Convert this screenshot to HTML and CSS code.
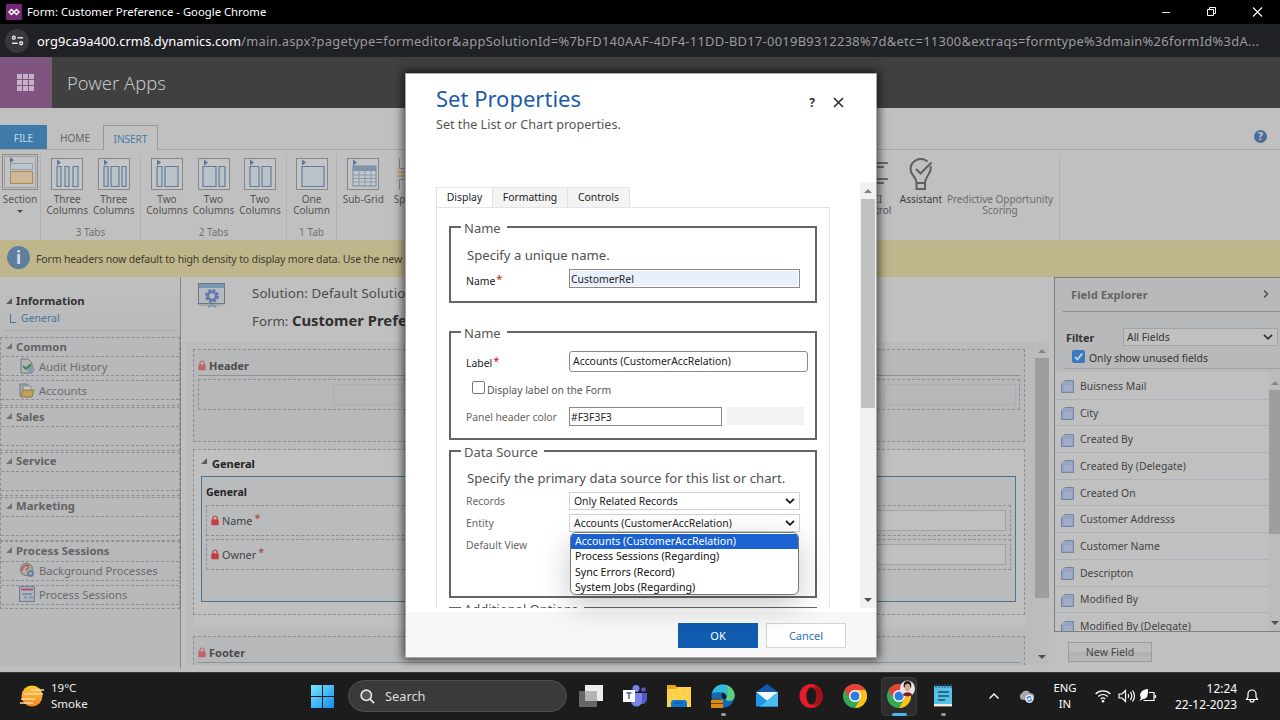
FILE: index.html
```html
<!DOCTYPE html>
<html lang="en">
<head>
<meta charset="utf-8">
<title>Form: Customer Preference</title>
<link rel="stylesheet" href="styles.css">
</head>
<body>
<svg class="defs" width="0" height="0">
  <symbol id="tile" viewBox="0 0 32 32"><rect x=".5" y=".5" width="31" height="31" fill="#c3c5c7" stroke="#85888b"/><path d="M6 1.500l4 3-4 3z" fill="#5b7693"/></symbol>
  <symbol id="lock" viewBox="0 0 8 11"><path d="M2 5V3a2 2 0 0 1 4 0v2" fill="none" stroke="currentColor" stroke-width="1.200"/><rect x=".3" y="4.600" width="7.400" height="5.600" rx=".8" fill="currentColor"/></symbol>
  <symbol id="field" viewBox="0 0 13 13"><path d="M4 .5h8.500v12H.5V4z" fill="#95a5c3" stroke="#74839f"/><path d="M.5 4H4V.5z" fill="#b6bfce" stroke="#8391ab" stroke-width=".6"/><path d="M3 6h8M3 8h8M3 10h8" stroke="#b3bed2" stroke-width=".7"/></symbol>
  <symbol id="chev" viewBox="0 0 10 6"><path d="M1 .8l4 4 4-4" fill="none" stroke="currentColor" stroke-width="1.700"/></symbol>
  <symbol id="chrome" viewBox="0 0 24 24"><circle cx="12" cy="12" r="12" fill="#35a853"/><path d="M12 12L1.600 6A12 12 0 0 1 22.400 6z" fill="#e94335"/><path d="M12 6h10.400A12 12 0 0 1 12 24l5.200-9z" fill="#fbc116"/><path d="M1.600 6l5.200 9L12 6z" fill="#e94335"/><circle cx="12" cy="12" r="6" fill="#fff"/><circle cx="12" cy="12" r="4.600" fill="#2a7de1"/></symbol>
</svg>
<div class="screen">
  <header class="titlebar">
    <svg class="app-mark" viewBox="0 0 16 16"><rect width="16" height="16" fill="#742774"/><path d="M5.500 5.500L8 8l-2.500 2.500L3 8zM10.500 5.500L13 8l-2.500 2.500L8 8z" fill="none" stroke="#fff" stroke-width="1.400"/></svg>
    <span class="window-title">Form: Customer Preference - Google Chrome</span>
    <svg class="win-ctl" viewBox="0 0 110 12"><path d="M1 6.500h8" stroke="#ddd" fill="none"/><path d="M46.500 3.500h6v6h-6zM48.500 3.500v-2h6v6h-2" stroke="#fff" fill="none"/><path d="M92 1.500l9 9M101 1.500l-9 9" stroke="#fff" fill="none" stroke-width="1.100"/></svg>
  </header>
  <div class="urlbar">
    <span class="site-btn"><svg viewBox="0 0 14 12" width="13" height="11"><g fill="none" stroke="#e3e3e3" stroke-width="1.500"><circle cx="3" cy="3" r="1.600"/><path d="M7 3h6M1 9h6"/><circle cx="11" cy="9" r="1.600"/></g></svg></span>
    <span class="url"><b>org9ca9a400.crm8.dynamics.com</b>/main.aspx?pagetype=formeditor&amp;appSolutionId=%7bFD140AAF-4DF4-11DD-BD17-0019B9312238%7d&amp;etc=11300&amp;extraqs=formtype%3dmain%26formId%3dA...</span>
  </div>
  <div class="appbar">
    <div class="waffle"><i></i><i></i><i></i><i></i><i></i><i></i><i></i><i></i><i></i></div>
    <span class="brand">Power Apps</span>
  </div>
  <nav class="ribbon-tabs">
    <span class="rt file">FILE</span><span class="rt home">HOME</span><span class="rt insert">INSERT</span>
    <span class="help">?</span>
  </nav>
  <div class="ribbon">
    <div class="rgroup g-section">
      <div class="rbtn"><svg class="ico-lg" viewBox="0 0 36 36"><rect x=".5" y=".5" width="35" height="35" fill="#bfbfbf" stroke="#8b8b8b"/><rect x="2.500" y="2.500" width="31" height="31" fill="#c1c3c5" stroke="#a0a0a0"/><path d="M8 3l4 3-4 3z" fill="#5b7693"/><rect x="8.500" y="9.500" width="22" height="6" fill="#bcc4cd" stroke="#8d9cae"/><rect x="8.500" y="17.500" width="22" height="12" fill="#cdb99a" stroke="#b08848"/></svg><span>Section</span><em class="down"></em></div>
    </div>
    <div class="rgroup g-three">
      <div class="rrow">
        <div class="rbtn"><svg class="ico"><use href="#tile"/><g class="cols"><path d="M6 8.500h4v20H6zM14 8.500h4v20h-4zM22 8.500h5v20h-5z"/></g></svg><span>Three<br>Columns</span></div>
        <div class="rbtn"><svg class="ico"><use href="#tile"/><g class="cols"><path d="M6 8.500h4v20H6zM13 8.500h8v20h-8zM24 8.500h4v20h-4z"/></g></svg><span>Three<br>Columns</span></div>
      </div>
      <div class="glabel">3 Tabs</div>
    </div>
    <div class="rgroup g-two">
      <div class="rrow">
        <div class="rbtn"><svg class="ico"><use href="#tile"/><g class="cols"><path d="M6 8.500h5v20H6zM14 8.500h13v20H14z"/></g></svg><span>Two<br>Columns</span></div>
        <div class="rbtn"><svg class="ico"><use href="#tile"/><g class="cols"><path d="M5 8.500h13v20H5zM21 8.500h6v20h-6z"/></g></svg><span>Two<br>Columns</span></div>
        <div class="rbtn"><svg class="ico"><use href="#tile"/><g class="cols"><path d="M6 8.500h9v20H6zM18 8.500h9v20h-9z"/></g></svg><span>Two<br>Columns</span></div>
      </div>
      <div class="glabel">2 Tabs</div>
    </div>
    <div class="rgroup g-one">
      <div class="rrow"><div class="rbtn"><svg class="ico"><use href="#tile"/><g class="cols"><path d="M6 8.500h22v20H6z"/></g></svg><span>One<br>Column</span></div></div>
      <div class="glabel">1 Tab</div>
    </div>
    <div class="rgroup g-grid">
      <div class="rrow">
        <div class="rbtn"><svg class="ico"><use href="#tile"/><rect x="6" y="8" width="23" height="20" fill="#c4c8cc" stroke="#76889d"/><path d="M6 8h23v5H6z" fill="#7f93aa"/><path d="M6 17h23M6 20.500h23M6 24h23M12 13v15M18 13v15M24 13v15" stroke="#8b9aab"/></svg><span>Sub-Grid</span></div>
        <div class="rbtn b-space"><svg class="ico"><path d="M2.500.500v10h27v-10M2.500 31.500v-10h27v10" fill="#c3c5c7" stroke="#85888b"/><path d="M0 14h32M0 18h32" stroke="#c09a55" stroke-width="1.500"/></svg><span>Spacer</span></div>
      </div>
    </div>
    <div class="rgroup g-ai">
      <div class="rrow">
        <div class="rbtn b-ctl"><svg class="ico"><path d="M4 5h26M10 9h16M4 21h26M10 25h16" stroke="#6c6c6c" stroke-width="2" fill="none"/></svg><span>BCI<br>Control</span></div>
        <div class="rbtn b-asst"><svg class="ico" viewBox="0 0 32 32"><g fill="none" stroke="#5f5f5f" stroke-width="2"><path d="M22.500 3.500A10.300 10.300 0 0 0 5.500 11c0 7 6 7 6 14M25.500 8c2 8-5.500 9-5.500 17M11.500 25v6h8.500v-6zM11.500 25h8.500"/><path d="M11 11l4.500 4.500L26.500 4.500"/></g></svg><span>Assistant</span></div>
        <div class="rbtn b-pred"><span>Predictive Opportunity<br>Scoring</span></div>
      </div>
    </div>
  </div>
  <div class="notice"><span class="info">i</span><span>Form headers now default to high density to display more data. Use the new form</span></div>

  <main class="work">
    <aside class="left">
      <div class="info-head"><em class="tri"></em>Information</div>
      <div class="info-link"><i></i>General</div>
      <section class="navg first"><h4><em class="tri"></em>Common</h4>
        <div class="navi"><svg viewBox="0 0 16 16"><path d="M2 1h7l4 4v10H2z" fill="#b3b5b6" stroke="#73797c"/><circle cx="12" cy="11" r="3.500" fill="#8b9aa6"/><path d="M4 8l3 3 5-5" stroke="#3f8150" stroke-width="1.800" fill="none"/></svg>Audit History</div>
        <div class="navi"><svg viewBox="0 0 16 16"><path d="M1 2h7l3 3v9H1z" fill="#a8abad" stroke="#73797c"/><path d="M4 4h8v7H4z" fill="#c4c8cb" stroke="#8a8a8a"/><path d="M2 15l2-7h11l-2 7z" fill="#c29f58" stroke="#97793f"/></svg>Accounts</div>
      </section>
      <section class="navg"><h4><em class="tri"></em>Sales</h4><div class="navi"></div></section>
      <section class="navg"><h4><em class="tri"></em>Service</h4><div class="navi"></div></section>
      <section class="navg"><h4><em class="tri"></em>Marketing</h4><div class="navi"></div></section>
      <section class="navg"><h4><em class="tri"></em>Process Sessions</h4>
        <div class="navi"><svg viewBox="0 0 16 16"><circle cx="7.500" cy="7.500" r="6" fill="#b7aaa0" stroke="#8d857f" stroke-width="1.500"/><path d="M3 9a5 5 0 0 1 7-5M7 8l3-3" stroke="#ae5b4e" stroke-width="1.500" fill="none"/><circle cx="11.500" cy="11.500" r="3.500" fill="#6681aa"/><circle cx="11.500" cy="11.500" r="1.200" fill="#b7b9ba"/></svg>Background Processes</div>
        <div class="navi"><svg viewBox="0 0 16 16"><rect x=".6" y=".6" width="14.800" height="14.800" fill="#b1b5bc" stroke="#6e7690"/><path d="M2 3.500h12" stroke="#a3576a" stroke-width="2"/><path d="M3 8h10M5 11.500h3M10 11.500h4" stroke="#8390ab" stroke-width="2"/></svg>Process Sessions</div>
      </section>
    </aside>

    <section class="center">
      <div class="form-head">
        <svg class="form-ico" viewBox="0 0 32 28"><path d="M1 22l5-3h22l3 3-5 2H5z" fill="#a8a8a8"/><rect x="3.500" y="1.500" width="26" height="20" fill="#b8bcc0" stroke="#6f7880"/><path d="M4 2h25v4H4z" fill="#7897b0"/><circle cx="17" cy="14" r="5.500" fill="none" stroke="#607bae" stroke-width="3" stroke-dasharray="2.800 1.500"/><circle cx="17" cy="14" r="4" fill="none" stroke="#607bae" stroke-width="2.500"/><path d="M13 25l4-2 4 2" stroke="#8896ad" stroke-width="2" fill="none"/></svg>
        <div><div class="sol">Solution: Default Solution</div><div class="frm">Form: <b>Customer Preference</b></div></div>
      </div>
      <div class="canvas">
        <div class="sheets">
          <div class="dash head-box">
            <div class="sec-title"><svg class="lock"><use href="#lock"/></svg>Header</div>
            <div class="dash cells"><i></i><i></i></div>
          </div>
          <div class="tab-sheet">
            <div class="dash tab-box">
              <div class="tab-title"><em class="tri"></em>General</div>
              <div class="blue-box">
                <h5>General</h5>
                <div class="dash frow"><svg class="lock"><use href="#lock"/></svg>Name<sup>*</sup><i></i></div>
                <div class="dash frow"><svg class="lock"><use href="#lock"/></svg>Owner<sup>*</sup><i></i></div>
              </div>
            </div>
          </div>
          <div class="dash foot-box"><div class="sec-title"><svg class="lock"><use href="#lock"/></svg>Footer</div></div>
        </div>
        <div class="vscroll"><em class="up"></em><i></i><em class="down"></em></div>
      </div>
    </section>

    <aside class="right">
      <div class="fe-panel">
        <div class="fe-title">Field Explorer<svg viewBox="0 0 6 8"><path d="M1 .5l3.500 3.500L1 7.500" fill="none" stroke="#555" stroke-width="1.600"/></svg></div>
        <div class="fe-filter"><b>Filter</b><span class="fe-select">All Fields<svg><use href="#chev"/></svg></span></div>
        <div class="fe-check"><svg viewBox="0 0 13 13"><rect width="13" height="13" rx="2" fill="#3a78c0"/><path d="M3 6.800l2.500 2.500L10.200 3.500" stroke="#ccd6e0" stroke-width="1.800" fill="none"/></svg>Only show unused fields</div>
        <div class="fe-list">
          <div class="fe-items">
            <div><svg><use href="#field"/></svg>Buisness Mail</div>
            <div><svg><use href="#field"/></svg>City</div>
            <div><svg><use href="#field"/></svg>Created By</div>
            <div><svg><use href="#field"/></svg>Created By (Delegate)</div>
            <div><svg><use href="#field"/></svg>Created On</div>
            <div><svg><use href="#field"/></svg>Customer Addresss</div>
            <div><svg><use href="#field"/></svg>Customer Name</div>
            <div><svg><use href="#field"/></svg>Descripton</div>
            <div><svg><use href="#field"/></svg>Modified By</div>
            <div><svg><use href="#field"/></svg>Modified By (Delegate)</div>
          </div>
          <div class="fe-scroll"><em class="up"></em><i></i><em class="down"></em></div>
        </div>
      </div>
      <div class="new-field">New Field</div>
    </aside>
  </main>

  <footer class="taskbar">
    <div class="weather"><svg viewBox="0 0 24 22" width="24" height="22"><defs><linearGradient id="sun" x2="0" y2="1"><stop offset="0" stop-color="#ffc933"/><stop offset="1" stop-color="#f2852a"/></linearGradient></defs><circle cx="12" cy="11" r="10.500" fill="url(#sun)"/><path d="M11 5h13M4 9h19M1 14h14M0 18h13" stroke="#f9dca6" stroke-width="1.600"/></svg><div>19°C<br>Smoke</div></div>
    <svg class="start" viewBox="0 0 23 23"><defs><linearGradient id="win" x2="1" y2="1"><stop offset="0" stop-color="#7ce6fb"/><stop offset="1" stop-color="#0f8df0"/></linearGradient></defs><path d="M0 0h11v11H0zM12 0h11v11H12zM0 12h11v11H0zM12 12h11v11H12z" fill="url(#win)"/></svg>
    <div class="search"><svg viewBox="0 0 16 16" width="15" height="15"><circle cx="6.700" cy="6.700" r="5.500" fill="#555" stroke="#e6e6e6" stroke-width="1.700"/><path d="M10.800 10.800L15 15" stroke="#e6e6e6" stroke-width="1.800"/></svg>Search</div>
    <div class="apps">
      <svg viewBox="0 0 24 24"><rect x="0" y="7" width="18" height="16" fill="#666"/><rect x="6" y="1" width="18" height="16" fill="#ededed"/><rect x="6" y="7" width="12" height="10" fill="#b4b4b4"/></svg>
      <svg viewBox="0 0 24 24"><circle cx="13" cy="4.500" r="3.500" fill="#7b83eb"/><circle cx="20.500" cy="5.500" r="2.300" fill="#5059c9"/><path d="M15 9h9v6a5 5 0 0 1-6 5z" fill="#5059c9"/><path d="M8 9h11v8a5.500 5.500 0 0 1-11 0z" fill="#7b83eb"/><rect x="0" y="6" width="12" height="12" fill="#fff"/><path d="M3.500 9h5M6 9v6" stroke="#4b53bc" stroke-width="1.400"/></svg>
      <svg viewBox="0 0 24 24"><path d="M0 1h8l2 2h14v20H0z" fill="#e9a815"/><path d="M0 5h9l2-2h13v20H0z" fill="#ffd04c"/><path d="M4 23v-4a3 3 0 0 1 3-3h10a3 3 0 0 1 3 3v4z" fill="#1177cc"/><path d="M8 19h8" stroke="#0b4f94"/></svg>
      <svg viewBox="0 0 24 24"><circle cx="12" cy="12" r="11.500" fill="#1269b8"/><path d="M1 9C3 3 7 .5 12 .5A11.500 11.500 0 0 1 23.500 13c-1 4-6 5-9 2.500 2-2 1-6-3-7-4-.8-8 0-10.500.5z" fill="#35b9d4"/><path d="M15 1c7 2 10 9 8 13-2 3.500-6 3.500-8.500 1.500C18 12 18 5 15 1z" fill="#61cf75"/><path d="M14.500 15.500c-4-1-5-4-2.500-7 3 1 4.500 4.500 2.500 7z" fill="#1c1c1c"/><rect x="0" y="16" width="12" height="8" fill="#d98b16"/><path d="M4 16v-2h4v2M0 19.500h12" stroke="#704007" fill="none"/></svg>
      <svg viewBox="0 0 24 24"><path d="M1 8l11-8 11 8v14H1z" fill="#1459a6"/><path d="M1 8h22l-11 9z" fill="#f2f7fb"/><path d="M1 8l11 9L23 8v14.500H1z" fill="#1e96e6"/><path d="M23 8v14.500H5z" fill="#4abdf2"/></svg>
      <svg viewBox="0 0 24 24"><ellipse cx="12" cy="12" rx="11.500" ry="12" fill="#e51a2c"/><ellipse cx="12.500" cy="12" rx="5.200" ry="8.800" fill="#1c1c1c"/><path d="M14 2a10 10 0 0 1 0 20c5-3 5-17 0-20z" fill="#a50f1b"/></svg>
      <svg><use href="#chrome"/></svg>
      <div class="active"><svg><use href="#chrome"/></svg><svg class="avatar" viewBox="0 0 16 18"><ellipse cx="8" cy="9" rx="8" ry="8.500" fill="#e8e4e2"/><path d="M4 5a4 4 0 0 1 8 0v3H4z" fill="#251a18"/><ellipse cx="8" cy="8" rx="3" ry="4" fill="#d6a88f"/><path d="M3 16c1-4 9-4 10 0-3 2-7 2-10 0z" fill="#7d1f2a"/></svg></div>
      <svg viewBox="0 0 24 24"><path d="M3 2h18v19H3z" fill="#58c0e6"/><path d="M3 20h18v3H3z" fill="#e8ecee"/><path d="M3 22.500h18" stroke="#b06c35"/><path d="M5 0v4M8 0v4M11 0v4M14 0v4M17 0v4M20 0v4" stroke="#1c5a7c"/><path d="M7 8h11M7 12h11M7 16h7" stroke="#15526f" stroke-width="1.300"/></svg>
    </div>
    <div class="tray">
      <svg class="t-up" viewBox="0 0 12 8"><path d="M1.500 6.500L6 2l4.500 4.500" fill="none" stroke="#fff" stroke-width="1.400"/></svg>
      <svg class="t-cloud" viewBox="0 0 18 15"><path d="M4 11a4 4 0 0 1 0-7 5 5 0 0 1 9 0 3.500 3.500 0 0 1 1 7z" fill="#a6a6a6"/><circle cx="12" cy="10" r="4.500" fill="#dfeaf5"/><path d="M9.800 10a2.300 2.300 0 0 1 4-1.500M14.200 10a2.300 2.300 0 0 1-4 1.500" stroke="#1767b5" stroke-width="1.200" fill="none"/></svg>
      <div class="lang">ENG<br>IN</div>
      <svg class="t-net" viewBox="0 0 64 16"><g fill="none" stroke="#fff" stroke-width="1.200"><path d="M.6 6a10.500 10.500 0 0 1 14.800 0M3.200 8.500a6.800 6.800 0 0 1 9.600 0M5.800 11a3.200 3.200 0 0 1 4.400 0"/><path d="M24 6h3l3.500-3.500v11L27 10h-3zM33 6q1.500 2 0 4M35.300 4q3 4 0 8M37.500 2.500q4 5.500 0 11"/><path d="M54 4.500h5v8H48.500M60.500 7v3"/></g><circle cx="8" cy="13.200" r="1.300" fill="#fff"/><path d="M53 1c-5 0-10 4-7 9l-1.500 3 3.500-2c5 0 5-5 5-10z" fill="#fff"/></svg>
      <div class="clock">12:24<br>22-12-2023</div>
      <svg class="t-bell" viewBox="0 0 14 16"><path d="M1.500 11.500L3 9V6a4 4 0 0 1 8 0v3l1.500 2.500zM5 12a2 2 0 0 0 4 0" fill="none" stroke="#fff" stroke-width="1.200"/></svg>
    </div>
    <i class="run r-a"></i><i class="run r-b"></i><i class="run r-c"></i>
  </footer>

  <div class="dialog">
    <div class="dlg-head">
      <div><h1>Set Properties</h1><p>Set the List or Chart properties.</p></div>
      <div class="dlg-ctl"><b>?</b><svg viewBox="0 0 11 11"><path d="M1 1l9 9M10 1l-9 9" stroke="#333" stroke-width="1.700"/></svg></div>
    </div>
    <div class="dlg-body">
      <div class="dlg-content">
        <div class="tabs"><span class="on t1">Display</span><span class="t2">Formatting</span><span class="t3">Controls</span></div>
        <div class="panel">
          <fieldset class="fs1"><legend>Name</legend>
            <p class="lead">Specify a unique name.</p>
            <div class="row"><label class="req low">Name<sup>*</sup></label><span class="inp fill">CustomerRel</span></div>
          </fieldset>
          <fieldset class="fs2"><legend>Name</legend>
            <div class="row tall"><label class="req low">Label<sup>*</sup></label><span class="inp round">Accounts (CustomerAccRelation)</span></div>
            <div class="chk"><i></i>Display label on the Form</div>
            <div class="row"><label>Panel header color</label><span class="inp color">#F3F3F3</span><span class="swatch"></span></div>
          </fieldset>
          <fieldset class="fs3"><legend>Data Source</legend>
            <p class="lead">Specify the primary data source for this list or chart.</p>
            <div class="row"><label>Records</label><span class="sel">Only Related Records<svg><use href="#chev"/></svg></span></div>
            <div class="row"><label>Entity</label><span class="sel">Accounts (CustomerAccRelation)<svg><use href="#chev"/></svg></span></div>
            <div class="row"><label>Default View</label></div>
          </fieldset>
          <fieldset class="fs4"><legend>Additional Options</legend></fieldset>
        </div>
      </div>
      <div class="dlg-scroll"><em class="up"></em><i></i><em class="down"></em></div>
    </div>
    <div class="dlg-foot"><span class="ok">OK</span><span class="cancel">Cancel</span></div>
    <div class="menu"><div class="hot">Accounts (CustomerAccRelation)</div><div>Process Sessions (Regarding)</div><div>Sync Errors (Record)</div><div>System Jobs (Regarding)</div></div>
  </div>
</div>
</body>
</html>
```
FILE: styles.css
```css
*{box-sizing:border-box}
body{margin:0;overflow:hidden;font-family:"Noto Sans","Open Sans",sans-serif;font-size:10.400px}
h1,h4,h5,p{margin:0}
svg{display:block;flex:none}
em,i{font-style:normal;flex:none}
.defs{position:absolute}
.screen{position:relative;width:1280px;height:720px;display:flex;flex-direction:column;background:#c0c0c0;overflow:hidden;white-space:nowrap}

/* small arrows shared by scrollbars and trees */
.up{width:0;height:0;border:4px solid transparent;border-top:0;border-bottom-color:#858585}
.down{width:0;height:0;border:4px solid transparent;border-bottom:0;border-top-color:#505050}
.tri{width:0;height:0;border-left:6px solid transparent;border-bottom:6px solid #5d5d5d}

/* browser chrome */
.titlebar{height:24px;background:#000;color:#fff;display:flex;align-items:center;padding-left:6px;flex:none}
.app-mark{width:16px;height:16px}
.window-title{font-size:11.300px;margin-left:5px;flex:1;padding-bottom:1px}
.win-ctl{width:110px;height:12px;margin-right:9px}
.urlbar{height:33px;background:#202124;display:flex;align-items:center;padding-left:5px;flex:none}
.site-btn{width:24px;height:24px;border-radius:50%;background:#37383a;display:grid;place-items:center}
.url{font-size:12.900px;color:#9a9b9e;margin-left:8px;letter-spacing:.285px}
.url b{font-weight:400;color:#fff;letter-spacing:.03px}

/* app header */
.appbar{height:51px;background:#404040;display:flex;align-items:center;flex:none}
.waffle{width:52px;height:51px;background:#7f5480;border-right:1px solid #666;display:grid;grid-template-columns:repeat(3,5px);grid-auto-rows:5px;gap:1px;place-content:center}
.waffle i{background:#c4b3c5}
.brand{font-size:18.400px;font-weight:300;color:#c4c4c4;margin-left:15px}

/* ribbon */
.ribbon-tabs{height:42px;display:flex;align-items:flex-end;border-bottom:1px solid #a6a6a6;flex:none;font-size:10.200px}
.rt{height:24px;line-height:27px;text-align:center;color:#666;letter-spacing:-.1px}
.file{width:47px;background:#3f7baa;color:#c7d7e3}
.home{width:56px}
.insert{width:55px;border:1px solid #999;border-bottom:0;color:#477ca5;background:#c1c1c1;height:25px;margin-bottom:-1px;line-height:26px}
.help{width:13px;height:13px;border-radius:50%;background:#4a6c93;color:#ccd;font-weight:700;text-align:center;line-height:13px;margin:0 13px 6px auto}
.ribbon{height:90px;display:flex;flex:none;padding-top:4px}
.rgroup{border-right:1px solid #b2b2b2;height:86px;display:flex;flex-direction:column;align-items:center;flex:none}
.rrow{display:flex;padding-top:4px}
.rbtn{width:46.500px;display:flex;flex-direction:column;align-items:center;font-size:10px;line-height:11px;color:#555;text-align:center}
.rbtn span{margin-top:4px}
.ico{width:32px;height:32px}
.ico-lg{width:36px;height:36px}
.cols{fill:#bcc2c9;stroke:#637d99;stroke-width:1.200}
.glabel{margin-top:auto;font-size:10px;line-height:15px;color:#707070}
.g-section{width:41px}
.g-section .down{margin-top:5px;border-width:3.500px;border-bottom:0}
.g-three{width:100px}.g-two{width:146px}.g-one{width:50px}
.g-grid{width:102px;align-items:flex-start;border:0;padding-left:3px}
.b-space .ico{margin-left:6px}
.g-ai{margin-left:413px;width:208px;align-items:flex-start}
.b-ctl{width:44px}.b-asst{width:50px;color:#3c3c3c}.b-pred{width:110px;color:#6c6c6c;margin-left:-1px}
.b-pred span{margin-top:36px}
.notice{height:37px;background:#bfb78b;display:flex;align-items:center;flex:none;color:#3c3b34;font-size:10.500px;letter-spacing:-.14px}
.notice span:last-child{padding-top:1px}
.info{width:23px;height:23px;border-radius:50%;background:#5f7e9f;color:#d6dde3;font:700 17px/23px "Noto Sans",sans-serif;text-align:center;margin:-2px 6px 0 7px}

/* work area */
.work{height:395px;display:flex;flex:none}
.left{width:181px;border-right:1px solid #858585;background:linear-gradient(#bfc0c0,#b7b9ba 60px);padding-top:15px;height:395px;border-bottom:6px solid #bebebe;flex:none}
.info-head{display:flex;align-items:center;font-weight:700;font-size:11.300px;height:17px;color:#333;gap:4px;padding-left:6px}
.info-link{display:flex;align-items:center;height:22px;margin:0 3px;border-bottom:1px solid #a9a9a9;padding:0 0 2px 7px;color:#4a7599;font-size:10.500px;line-height:17px}
.info-link i{width:6px;height:9px;border:solid #4a7599;border-width:0 0 1px 1px;margin-right:5px}
.navg{border:1px dashed #8d8f90;height:44px;margin-bottom:.750px;padding-bottom:4px}
.navg.first{margin-top:6px;margin-bottom:1px}
.navg h4{display:flex;align-items:center;gap:4px;padding:0 0 2px 5px;height:18.300px;font-size:11.300px;color:#626364}
.navg h4 .tri{border-bottom-color:#707172}
.navi{height:20px;border:dashed #8d8f90;border-width:1px 0;margin-bottom:4px;display:flex;align-items:center;font-size:11.200px;color:#6a6b6c;padding-left:18px;gap:4px}
.navi svg{width:16px;height:16px}
.first{height:69px}
.navg:last-child{height:68px}
.navg:last-child .navi{padding-bottom:1px}
.center{width:873px;flex:none}
.form-head{height:65px;display:flex;padding-left:14px;color:#4c4c4c;font-size:13.300px}
.form-ico{width:32px;height:28px;margin-top:5px;margin-right:25px}
.sol{line-height:18px;margin-top:7px;letter-spacing:.1px}
.frm{line-height:18px;margin-top:9px}
.frm b{font-size:14.800px;color:#303030}
.canvas{height:323px;margin-left:4px;width:864px;background:#b9bbbc;display:flex;overflow:hidden}
.dash{border:1px dashed #8d8f90}
.sheets{width:841px;padding:7px 0 0 8px}
.lock{width:8px;height:11px;margin-right:3px;color:#c0666a}
.sec-title{display:flex;align-items:center;font-weight:700;font-size:11px;color:#4d4d4d;height:19px;border-bottom:1px solid #8f9192;padding-bottom:2px}
.head-box{width:832px;height:93px;padding:7px 4px 0;background:#b6b8ba}
.cells{height:31px;margin-top:3px;display:flex;justify-content:space-between;padding:4px 3px 0 134px}
.cells i{width:132px;height:21px;border:1px solid #acafb1}
.tab-sheet{width:832px;height:179px;background:#c0c0c0;margin-top:7px}
.tab-box{height:166px;padding:3px 8px 0 7px}
.tab-title{display:flex;align-items:center;gap:5px;font-weight:700;font-size:11px;color:#222;height:23px;padding-bottom:2px}
.tab-title .tri{margin-bottom:5px}
.blue-box{height:126px;border:1px solid #49758f;background:#b9bbbd;padding:7px 4px 0}
h5{font-size:10.500px;line-height:17px;padding-bottom:1px;color:#262626}
.frow{height:31px;margin-top:3px;display:flex;align-items:center;padding:0 4px;font-size:10.800px;color:#444}
.frow .lock{color:#c43b44}
.frow sup{color:#b03c3c;font-size:11px;line-height:10px;margin:-5px 0 0 2px;vertical-align:baseline}
.frow i{margin-left:auto;width:590px;height:21px;border:1px solid #a2a4a5;background:#c0c0c0}
.foot-box{width:832px;height:40px;margin-top:8px;padding:7px 4px 0;background:#b6b8ba}
.vscroll{width:15px;margin-left:8px;background:#bcbcbc;display:flex;flex-direction:column;align-items:center;padding-top:7px}
.vscroll i{width:14px;height:240px;background:#9e9e9e;margin-top:5px}
.vscroll .down{margin-top:57px}
.right{width:226px;flex:none}
.fe-panel{height:355px;border:1px solid #7e7e7e;border-width:1px 0 1px 1px;background:#b7b9ba;display:flex;flex-direction:column}
.fe-title{height:34px;margin-left:8px;border-bottom:1px solid #8d8d8d;display:flex;align-items:center;justify-content:space-between;padding:0 11px 1px 8px;font-weight:700;font-size:11.300px;color:#666}
.fe-title svg{width:6px;height:8px}
.fe-filter{height:18px;margin:16px 2px 0 11px;display:flex;align-items:center;justify-content:space-between;color:#333}
.fe-filter b{font-size:10.800px}
.fe-select{width:155px;height:18px;border:1px solid #a3a3a3;background:#c0c0c0;display:flex;align-items:center;justify-content:space-between;padding:0 4px 0 3px;color:#333}
.fe-select svg{width:10px;height:6px}
.fe-check{height:23px;margin-left:8px;border-bottom:1px solid #9fa0a1;display:flex;align-items:center;gap:4px;padding:1px 0 0 9px;color:#333}
.fe-check svg{width:13px;height:13px;margin-top:-2px}
.fe-list{margin-top:3px;height:259px;background:#c0c0c0;display:flex;overflow:hidden}
.fe-items{width:214px;padding-top:1px}
.fe-items div{height:26.700px;border-bottom:1px solid #a9b2bb;display:flex;align-items:center;padding:0 0 0 6px;gap:6px;color:#444}
.fe-items svg{width:13px;height:13px;margin-top:2px}
.fe-scroll{width:11px;display:flex;flex-direction:column;align-items:center;padding-top:9px;background:#bcbcbc}
.fe-scroll i{width:11px;height:144px;background:#9e9e9e;margin-top:5px}
.fe-scroll .down{margin-top:87px}
.new-field{width:84px;height:20px;margin:10px 0 0 14px;border:1px solid #9b9b9b;background:linear-gradient(#bdbdbd 50%,#b0b0b0 50%,#b9b9b9);line-height:18px;text-align:center;font-size:10.600px;color:#444}

/* taskbar */
.taskbar{position:relative;height:48px;background:#1c1c1c;border-top:1px solid #3b3b3b;color:#fff;display:flex;align-items:center;flex:none;padding-bottom:1px}
.weather{display:flex;align-items:center;gap:7px;margin-left:20px;width:291px;font-size:11.500px;line-height:16px;color:#eee}
.start{width:23px;height:23px}
.search{width:219px;height:32px;border-radius:16px;background:#3a3a3a;border:1px solid #4d4d4d;margin-left:14px;display:flex;align-items:center;padding-left:11px;gap:10px;font-size:12.800px;color:#ddd}
.apps{display:flex;align-items:center;gap:20px;margin-left:12px}
.apps>svg{width:24px;height:24px}
.active{position:relative;width:36px;height:39px;background:#2d2d2d;border:1px solid #3a3a3a;border-radius:4px;margin:0 -6px 0 -6px;display:grid;place-items:center}
.active svg{width:24px;height:24px}
.active .avatar{position:absolute;width:15px;height:17px;left:18px;top:2px}
.tray{margin-left:auto;display:flex;align-items:center;padding-right:21px}
.t-up{width:12px;height:8px;margin-right:18px}
.t-cloud{width:17px;height:15px;margin-right:17px}
.lang{width:26px;text-align:center;font-size:11.300px;line-height:16px;margin-right:17px}
.t-net{width:64px;height:16px;margin-right:16px}
.clock{text-align:right;font-size:11.900px;line-height:16px;margin-right:8px}
.t-bell{width:14px;height:16px}
.run{position:absolute;bottom:4px;height:3px;border-radius:2px;background:#999;width:5px}
.r-a{left:721px}.r-b{left:892px;width:15px;background:#4cb5f0}.r-c{left:941px}

/* dialog */
.dialog{position:absolute;left:405px;top:73px;width:472px;height:585px;background:#fff;border:1px solid #aaa;box-shadow:0 0 9px 2px rgba(0,0,0,.65);color:#444}
.dlg-head{height:108px;padding:11px 32px 0 30px;display:flex;justify-content:space-between}
h1{font-size:22px;line-height:26px;font-weight:400;color:#1a5baa}
.dlg-head p{font-size:12.600px;line-height:18px;margin-top:5px;color:#555}
.dlg-ctl{display:flex;gap:18px;height:30px;margin-top:2px;align-items:center;font-size:12px;color:#333}
.dlg-ctl svg{width:11px;height:11px}
.dlg-body{height:426px;display:flex;justify-content:space-between;padding-left:30px;overflow:hidden}
.dlg-content{width:394px;padding-top:5px}
.tabs{display:flex;height:20px;line-height:19px;text-align:center;color:#222}
.tabs span{background:#f3f3f3;border:1px solid #e3e3e3;border-width:1px 1px 0 0}
.tabs .on{background:#fff;border-left-width:1px;color:#123}
.t1{width:57px}.t2{width:75px}.t3{width:62px}
.panel{border:1px solid #e4e4e4;height:460px;padding:8px 12px 0}
fieldset{margin:0;min-width:0;width:368px;border:2px solid #666;padding:0 7px 0 15px}
legend{font-size:13px;line-height:18px;padding:3px 6px 1px 3px;margin-left:-5px;color:#555}
.fs1{height:87px;margin-bottom:18px}
.fs2{height:119px}
.fs3{height:158px}
.fs4{height:60px;margin-top:-1px}
.lead{font-size:13.100px;line-height:24px;padding:5px 0 0 1px;color:#505050}
.fs1 .row{padding-top:1px}
.row{display:flex;align-items:center;height:22px}
.row label{width:103px;color:#666}
.row label.low{padding-top:4px}
.row .req{color:#222}
.req sup{color:#c11;font-size:11px;line-height:8px;vertical-align:2px;margin-left:1px}
.inp,.sel{height:19px;border:1px solid #8a8a8a;display:flex;align-items:center;color:#222}
.fill{width:231px;background:#e8f0fe;padding-left:1px;box-shadow:inset 0 0 0 1px #fff}
.tall{margin-top:7px}
.round{width:239px;height:21px;border-radius:3px;padding-left:3px}
.chk{height:20px;margin-top:7px;display:flex;align-items:center;padding:1px 0 0 6px;gap:2px;color:#555}
.chk i{width:13px;height:13px;border:1px solid #777;border-radius:2px;margin-top:-4px}
.chk+.row{margin-top:6px}
.chk+.row label{letter-spacing:-.05px;padding-top:1px}
.color{width:153px;padding-left:1px;padding-top:1px}
.swatch{width:77px;height:18px;background:#f2f2f2;margin-left:5px}
.sel{width:231px;height:18px;border-color:#d0d0d0;padding:0 4px;justify-content:space-between}
.sel svg{width:10px;height:6px;color:#111}
.fs3 .lead{line-height:23px}
.dlg-scroll{width:16px;background:#f1f1f1;display:flex;flex-direction:column;align-items:center;padding-top:7px}
.dlg-scroll i{width:14px;height:209px;background:#c1c1c1;margin-top:6px}
.dlg-scroll .down{margin-top:190px}
.dlg-foot{height:45px;margin-top:4px;background:#f7f7f7;display:flex;align-items:center;justify-content:flex-end;gap:8px;padding:1px 30px 0 0}
.dlg-foot span{width:80px;height:25px;line-height:23px;text-align:center;border:1px solid #d4d4d4;background:#fff;color:#2a72bd;font-size:11px}
.dlg-foot .ok{background:#115cb0;border-color:#115cb0;color:#fff}
.menu{position:absolute;left:164px;top:458px;width:229px;height:63px;background:#fff;border:1px solid #777;border-radius:6px;overflow:hidden;box-shadow:0 10px 30px rgba(0,0,0,.22);color:#111;padding-top:1px}
.menu div{height:15.400px;line-height:15.400px;padding-left:4px;font-size:10.600px}
.menu .hot{background:#1a62d2;color:#fff}
```
